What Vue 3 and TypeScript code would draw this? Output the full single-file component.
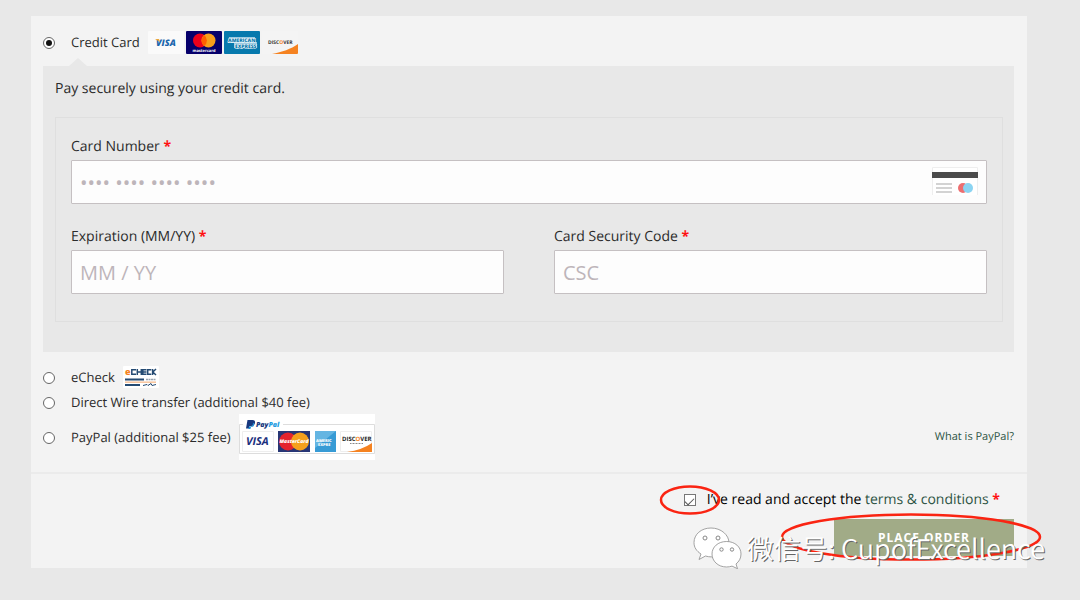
<script setup lang="ts">
import { ref } from 'vue'

const method = ref<string>('card')
const cardNumber = ref<string>('')
const expiry = ref<string>('')
const csc = ref<string>('')
const accepted = ref<boolean>(true)
</script>

<template>
  <form class="checkout" @submit.prevent>
    <div class="methods">
      <div class="method first">
        <input id="pay-card" v-model="method" type="radio" name="method" value="card" />
        <label for="pay-card">Credit Card</label>
        <div class="brands">
          <svg width="36" height="23" viewBox="0 0 36 23" role="img" aria-label="Visa card">
            <rect width="36" height="23" rx="1" fill="#fafafa" />
            <text x="8" y="15" class="logo" font-size="9" font-style="italic" font-weight="800" fill="#1b66ad">VISA</text>
            <path d="M7 8h4l1 3z" fill="#e9a63a" />
          </svg>
          <svg width="36" height="23" viewBox="0 0 36 23" role="img" aria-label="Mastercard">
            <rect width="36" height="23" rx="1" fill="#06006b" />
            <circle cx="14" cy="9.5" r="7" fill="#eb001b" />
            <circle cx="22.5" cy="9.5" r="7" fill="#f79e1b" />
            <path d="M18.2 4a7 7 0 0 1 0 11a7 7 0 0 1 0-11z" fill="#ff5f00" />
            <text x="18" y="20.500" class="logo" font-size="4" font-weight="700" text-anchor="middle" fill="#fff">mastercard</text>
          </svg>
          <svg width="36" height="23" viewBox="0 0 36 23" role="img" aria-label="American Express">
            <rect width="36" height="23" rx="1" fill="#0679ad" />
            <path d="M5 6h26v5h2v6H10v-5H4z" fill="#9dcce2" />
            <text x="4" y="11" class="logo" font-size="5" font-weight="800" fill="#0679ad" stroke="#fff" stroke-width="1" paint-order="stroke">AMERICAN</text>
            <text x="11" y="17" class="logo" font-size="5" font-weight="800" fill="#0679ad" stroke="#fff" stroke-width="1" paint-order="stroke">EXPRESS</text>
          </svg>
          <svg width="36" height="23" viewBox="0 0 36 23" role="img" aria-label="Discover card">
            <rect width="36" height="23" rx="1" fill="#f4f4f4" />
            <text x="6" y="13" class="logo" font-size="5" font-weight="700" fill="#333">DISC<tspan fill="#f58220">O</tspan>VER</text>
            <path d="M10 23C20 21 29 18 36 13v9q0 1-1 1z" fill="#f58220" />
          </svg>
        </div>
      </div>

      <section class="card-box">
        <p>Pay securely using your credit card.</p>
        <div class="fields">
          <div class="field wide">
            <label for="number">Card Number <b>*</b></label>
            <div class="number">
              <input id="number" v-model="cardNumber" type="text" placeholder="•••• •••• •••• ••••" />
              <svg width="46" height="29" viewBox="0 0 46 29" aria-hidden="true">
                <path d="M.5 28V.5h45V28" fill="#fff" stroke="#eee" />
                <path d="M0 5h46v6H0z" fill="#4b4b4b" />
                <path d="M4 17h16M4 21h16M4 25h16" stroke="#d3d3d3" stroke-width="2" />
                <circle cx="31" cy="21" r="5" fill="#ed6e70" />
                <circle cx="36" cy="21" r="5" fill="#8bd4f2" />
              </svg>
            </div>
          </div>
          <div class="field">
            <label for="expiry">Expiration (MM/YY) <b>*</b></label>
            <input id="expiry" v-model="expiry" type="text" placeholder="MM / YY" />
          </div>
          <div class="field">
            <label for="csc">Card Security Code <b>*</b></label>
            <input id="csc" v-model="csc" type="text" placeholder="CSC" />
          </div>
        </div>
      </section>

      <div class="method echeck">
        <input id="pay-echeck" v-model="method" type="radio" name="method" value="echeck" />
        <label for="pay-echeck">eCheck</label>
        <svg width="36" height="22" viewBox="0 0 36 22" role="img" aria-label="eCheck logo">
          <rect width="36" height="22" rx="1" fill="#fff" />
          <text x="2" y="9" class="logo" font-size="9" font-weight="800" fill="#f58220">e</text>
          <g fill="none" stroke="#254b73" stroke-width="1.500">
            <path d="M13 3.800H8.800v4.500H13M14.300 3v6M18.300 3v6M14.300 6h4M23.500 3.800h-3.700v4.500h3.700M20 6h3.500M28.300 3.800h-3.600v4.500h3.600M29.600 3v6M33 3l-3.200 3L33 9" />
          </g>
          <path d="M2 13.500h19M2 19h15" stroke="#254b73" stroke-width="1.800" />
          <path d="M23 13.500h10" stroke="#9aa5b1" stroke-width="1.500" stroke-dasharray="2 .5" />
          <path d="M2 16.200h31" stroke="#f8c49c" stroke-width="1.500" />
          <path d="M20 19.500l4-1 1 1 3-2 1 2 4-1" fill="none" stroke="#254b73" />
        </svg>
      </div>
      <div class="method">
        <input id="pay-wire" v-model="method" type="radio" name="method" value="wire" />
        <label for="pay-wire">Direct Wire transfer (additional $40 fee)</label>
      </div>
      <div class="method last">
        <input id="pay-paypal" v-model="method" type="radio" name="method" value="paypal" />
        <label for="pay-paypal">PayPal (additional $25 fee)</label>
        <svg width="136" height="46" viewBox="0 0 136 46" role="img" aria-label="PayPal and accepted cards">
          <rect width="136" height="46" fill="#fff" />
          <path d="M4 10.500H.5v29h135v-29H44" fill="none" stroke="#ddd" />
          <path d="M8.500 6h5q3 0 2.500 3t-4 3h-1.500l-.5 2.500H7z" fill="#17377e" />
          <path d="M14 9q0 3.500-3 3.500h-1l-.6 2.500h2l.6-2q3 0 3-2.500t-1-1.500z" fill="#1a8fd6" />
          <text x="17" y="13" class="logo" font-size="7" font-style="italic" font-weight="800" fill="#17377e">Pay<tspan fill="#239be0">Pal</tspan></text>
          <path d="M3.500 17.500h31v20h-31z" fill="#fff" stroke="#eee" />
          <text x="7" y="31" class="logo" font-size="11" font-style="italic" font-weight="700" fill="#1b2f7d">VISA</text>
          <rect x="39" y="17" width="32" height="21" fill="#273675" />
          <circle cx="49" cy="27.500" r="9" fill="#e4232d" />
          <circle cx="61" cy="27.500" r="9" fill="#f5a01c" />
          <text x="55" y="29" class="logo" font-size="5" font-style="italic" font-weight="800" text-anchor="middle" fill="#fff">MasterCard</text>
          <rect x="76" y="17" width="21" height="21" fill="#379bd5" />
          <path d="M76 17h21L76 34z" fill="#64b5e2" />
          <text x="77" y="28" class="logo" font-size="4" font-weight="800" fill="#fff">AMERIC</text>
          <text x="79" y="32" class="logo" font-size="4" font-weight="800" fill="#fff">EXPRE</text>
          <path d="M101.500 17.500h31v20h-31z" fill="#fff" stroke="#eee" />
          <text x="103" y="27" class="logo" font-size="6" font-weight="700" fill="#222">DISC<tspan fill="#f58220">O</tspan>VER</text>
          <path d="M108 38q15-2 25-9v9z" fill="#f58220" />
          <path d="M111 29.500h13" stroke="#888" stroke-dasharray="1 .5" />
        </svg>
        <a href="#paypal" class="what">What is PayPal?</a>
      </div>
    </div>

    <div class="finish">
      <div class="terms">
        <input id="terms" v-model="accepted" type="checkbox" />
        <label for="terms">I’ve read and accept the <a href="#terms">terms &amp; conditions</a> <b>*</b></label>
      </div>
      <button type="submit">PLACE ORDER</button>

      <svg class="marks" width="384" height="80" viewBox="0 0 384 80" aria-hidden="true">
        <ellipse cx="31" cy="19" rx="29" ry="13.500" />
        <ellipse cx="252" cy="56" rx="129" ry="22.500" />
      </svg>
      <div class="watermark">
        <svg width="50" height="42" viewBox="0 0 50 42" aria-hidden="true">
          <g fill="#fff" stroke="#8c8c8c" stroke-width=".8">
            <path d="M18 1C8 1 1 7.500 1 15.500c0 5 2.500 8.500 7 11.500l-2 5.500 6.500-3.500c2 .6 4 .9 6 .9 10 0 17.500-6 17.500-14S28 1 18 1z" />
            <path d="M33.500 14.500C25 14.500 19 20 19 27s6 13 14.500 13c2 0 4-.3 5.500-.9l5.500 2.600-1.500-4.700c3-2.500 5-5.500 5-10 0-7-6-12.500-14.500-12.500z" />
          </g>
          <g fill="#fff" stroke="#888">
            <circle cx="12" cy="11" r="2" /><circle cx="25" cy="11" r="2" />
            <circle cx="28.500" cy="22.500" r="1.700" /><circle cx="39" cy="22.500" r="1.700" />
          </g>
        </svg>
        <span>微信号: CupofExcellence</span>
      </div>
    </div>
  </form>
</template>

<style>
body {
  background: #e8e8e8;
}
</style>

<style scoped>
* {
  box-sizing: border-box;
}
.checkout {
  margin: 16px 53px 32px 31px;
  background: #f3f3f3;
  color: #2b2b2b;
  font: 13px/24px "Open Sans", "Noto Sans", sans-serif;
  text-rendering: geometricPrecision;
}
.methods {
  padding: 8px 13px 12px 12px;
  border-bottom: 2px solid #ebebeb;
}
.method {
  display: flex;
  align-items: center;
  min-height: 24px;
}
.method.first {
  height: 36px;
  margin-bottom: 6px;
}
.method.echeck {
  min-height: 26px;
}
.method.last {
  min-height: 46px;
}
.method svg {
  flex: none;
  margin-left: 8px;
}
.brands {
  display: flex;
  gap: 2px;
  margin-left: 8px;
}
.brands svg {
  margin: 0;
}
.logo {
  font-family: "Open Sans", sans-serif;
}
input[type="radio"] {
  appearance: none;
  flex: none;
  display: grid;
  place-items: center;
  width: 12px;
  height: 12px;
  margin: 2px 16px 0 0;
  border: 1px solid #666;
  border-radius: 50%;
  background: #fff;
}
input[type="radio"]:checked::before {
  content: "";
  width: 6px;
  height: 6px;
  border-radius: 50%;
  background: #111;
}
.card-box {
  position: relative;
  margin-bottom: 12px;
  padding: 11px 11px 30px 12px;
  background: #e8e8e8;
}
.card-box::before {
  content: "";
  position: absolute;
  left: 26px;
  bottom: 100%;
  border: 9px solid transparent;
  border-top: 0;
  border-bottom: 8px solid #e8e8e8;
}
p {
  margin: 0 0 16px;
  font-size: 14px;
}
.fields {
  display: grid;
  grid-template-columns: 1fr 1fr;
  gap: 21px 50px;
  padding: 17px 15px 27px;
  border: 1px solid #dfdfdf;
}
.wide {
  grid-column: 1 / -1;
}
.field label {
  display: block;
  margin-bottom: 1px;
  font-size: 14px;
}
b {
  color: #f11;
}
input[type="text"] {
  display: block;
  width: 100%;
  height: 44px;
  padding: 0 8px;
  border: 1px solid #c5c0c2;
  border-radius: 1px;
  background: #fdfdfd;
  color: #333;
  font: 20px "Open Sans", sans-serif;
}
input::placeholder {
  color: #bdb5ba;
  opacity: 1;
}
.number {
  position: relative;
}
.number svg {
  position: absolute;
  top: 7px;
  right: 9px;
}
a {
  color: #2d5444;
  text-decoration: none;
}
.what {
  margin-left: auto;
  font-size: 11px;
}
.finish {
  position: relative;
  padding: 14px 13px 12px;
}
.terms {
  display: flex;
  align-items: center;
  justify-content: flex-end;
  margin: 0 14px 7px 0;
  font-size: 14px;
  font-weight: 500;
  color: #000;
}
input[type="checkbox"] {
  appearance: none;
  display: grid;
  place-items: center;
  width: 12px;
  height: 12px;
  margin: 0 11px 0 0;
  border: 1px solid #777;
  background: #fff;
}
input[type="checkbox"]:checked::before {
  content: "";
  width: 8px;
  height: 4px;
  border: solid #555;
  border-width: 0 0 1px 1px;
  transform: rotate(-45deg);
}
button {
  display: block;
  width: 180px;
  height: 37px;
  margin-left: auto;
  padding: 0;
  border: 0;
  background: #a1ab87;
  color: #fff;
  font: 700 12px "Open Sans", sans-serif;
  letter-spacing: 1px;
}
.marks {
  position: absolute;
  top: 7px;
  right: -16px;
  fill: none;
  stroke: #fa2412;
  stroke-width: 2.5;
  pointer-events: none;
}
.watermark {
  position: absolute;
  top: 53px;
  right: -18px;
  display: flex;
  align-items: center;
  gap: 4px;
  color: #fff;
  font: 350 27px/42px "Noto Sans CJK SC", sans-serif;
  text-shadow: 1px 1px 0 #666;
  white-space: nowrap;
  pointer-events: none;
}
</style>
